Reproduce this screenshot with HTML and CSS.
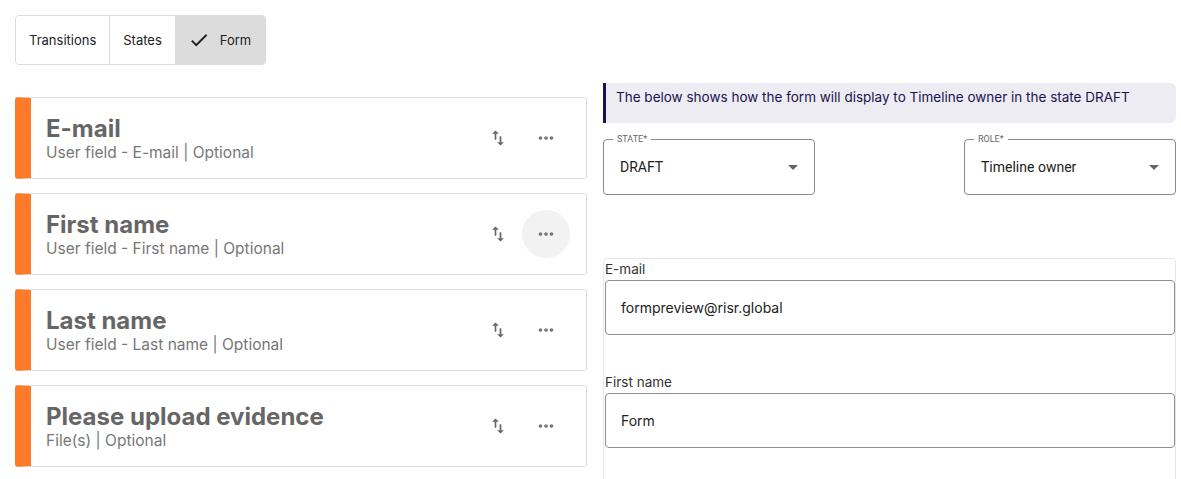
FILE: index.html
```html
<!DOCTYPE html>
<html lang="en">

<head>
    <meta charset="UTF-8">
    <title>Form builder</title>
    <link rel="stylesheet" href="styles.css">
</head>

<body>
    <div class="tabs">
        <button class="tab">Transitions</button>
        <button class="tab">States</button>
        <button class="tab active">
            <svg class="check" viewBox="0 0 24 24" width="22" height="22"><path d="M9 16.17L4.83 12l-1.42 1.41L9 19 21 7l-1.41-1.41z"/></svg>
            Form
        </button>
    </div>

    <div class="layout">
        <div class="fields">
            <div class="field-card">
                <div class="field-text">
                    <div class="field-title">E-mail</div>
                    <div class="field-sub">User field - E-mail | Optional</div>
                </div>
                <span class="icon-btn"><svg viewBox="0 0 24 24" width="20" height="20"><path d="M9 3L5 6.99h3V14h2V6.99h3L9 3zm7 14.01V10h-2v7.01h-3L15 21l4-3.99h-3z"/></svg></span>
                <span class="icon-btn dots"><svg viewBox="0 0 24 24" width="22" height="22"><path d="M6 10c-1.1 0-2 .9-2 2s.9 2 2 2 2-.9 2-2-.9-2-2-2zm12 0c-1.1 0-2 .9-2 2s.9 2 2 2 2-.9 2-2-.9-2-2-2zm-6 0c-1.1 0-2 .9-2 2s.9 2 2 2 2-.9 2-2-.9-2-2-2z"/></svg></span>
            </div>
            <div class="field-card">
                <div class="field-text">
                    <div class="field-title">First name</div>
                    <div class="field-sub">User field - First name | Optional</div>
                </div>
                <span class="icon-btn"><svg viewBox="0 0 24 24" width="20" height="20"><path d="M9 3L5 6.99h3V14h2V6.99h3L9 3zm7 14.01V10h-2v7.01h-3L15 21l4-3.99h-3z"/></svg></span>
                <span class="icon-btn dots hover"><svg viewBox="0 0 24 24" width="22" height="22"><path d="M6 10c-1.1 0-2 .9-2 2s.9 2 2 2 2-.9 2-2-.9-2-2-2zm12 0c-1.1 0-2 .9-2 2s.9 2 2 2 2-.9 2-2-.9-2-2-2zm-6 0c-1.1 0-2 .9-2 2s.9 2 2 2 2-.9 2-2-.9-2-2-2z"/></svg></span>
            </div>
            <div class="field-card">
                <div class="field-text">
                    <div class="field-title">Last name</div>
                    <div class="field-sub">User field - Last name | Optional</div>
                </div>
                <span class="icon-btn"><svg viewBox="0 0 24 24" width="20" height="20"><path d="M9 3L5 6.99h3V14h2V6.99h3L9 3zm7 14.01V10h-2v7.01h-3L15 21l4-3.99h-3z"/></svg></span>
                <span class="icon-btn dots"><svg viewBox="0 0 24 24" width="22" height="22"><path d="M6 10c-1.1 0-2 .9-2 2s.9 2 2 2 2-.9 2-2-.9-2-2-2zm12 0c-1.1 0-2 .9-2 2s.9 2 2 2 2-.9 2-2-.9-2-2-2zm-6 0c-1.1 0-2 .9-2 2s.9 2 2 2 2-.9 2-2-.9-2-2-2z"/></svg></span>
            </div>
            <div class="field-card">
                <div class="field-text">
                    <div class="field-title">Please upload evidence</div>
                    <div class="field-sub">File(s) | Optional</div>
                </div>
                <span class="icon-btn"><svg viewBox="0 0 24 24" width="20" height="20"><path d="M9 3L5 6.99h3V14h2V6.99h3L9 3zm7 14.01V10h-2v7.01h-3L15 21l4-3.99h-3z"/></svg></span>
                <span class="icon-btn dots"><svg viewBox="0 0 24 24" width="22" height="22"><path d="M6 10c-1.1 0-2 .9-2 2s.9 2 2 2 2-.9 2-2-.9-2-2-2zm12 0c-1.1 0-2 .9-2 2s.9 2 2 2 2-.9 2-2-.9-2-2-2zm-6 0c-1.1 0-2 .9-2 2s.9 2 2 2 2-.9 2-2-.9-2-2-2z"/></svg></span>
            </div>
        </div>

        <div class="preview">
            <div class="notice">The below shows how the form will display to Timeline owner in the state DRAFT</div>

            <div class="selects">
                <div class="select">
                    <span class="select-label">STATE*</span>
                    <span class="select-value">DRAFT</span>
                    <span class="caret"></span>
                </div>
                <div class="select">
                    <span class="select-label">ROLE*</span>
                    <span class="select-value">Timeline owner</span>
                    <span class="caret"></span>
                </div>
            </div>

            <div class="form-preview">
                <div class="form-group">
                    <label>E-mail</label>
                    <div class="input">formpreview@risr.global</div>
                </div>
                <div class="form-group">
                    <label>First name</label>
                    <div class="input">Form</div>
                </div>
            </div>
        </div>
    </div>
</body>

</html>
```

FILE: styles.css
```css
body {
    margin: 0;
    padding: 15px 5px 0 15px;
    font-family: "Inter", "Liberation Sans", sans-serif;
    color: #333;
    background: white;
    overflow: hidden;
}

/* tabs */
.tabs {
    display: inline-flex;
    border: 1px solid #dcdcdc;
    border-radius: 4px;
    overflow: hidden;
    height: 48px;
}

.tab {
    display: flex;
    align-items: center;
    gap: 10px;
    padding: 0 13px;
    border: none;
    border-right: 1px solid #dcdcdc;
    background: white;
    font-family: inherit;
    font-size: 13px;
    color: #222;
}

.tab:last-child {
    border-right: none;
}

.tab.active {
    background: #dcdcdc;
    padding: 0 14px 0 12px;
}

.check {
    fill: #222;
}

/* layout */
.layout {
    display: grid;
    grid-template-columns: 572px 1fr;
    gap: 16px;
    margin-top: 18px;
}

.fields {
    display: flex;
    flex-direction: column;
    gap: 14px;
    padding-top: 14px;
}

.field-card {
    display: flex;
    align-items: center;
    height: 82px;
    border: 1px solid #dedede;
    border-left: 16px solid #fd7a2b;
    border-radius: 3px;
    padding-right: 16px;
    box-sizing: border-box;
}

.field-text {
    flex: 1;
    padding-left: 15px;
    padding-top: 2px;
}

.field-title {
    font-size: 24px;
    font-weight: 700;
    color: #666;
    line-height: 28px;
}

.field-sub {
    font-size: 15.5px;
    color: #777;
    line-height: 20px;
}

.icon-btn {
    display: flex;
    align-items: center;
    justify-content: center;
    width: 48px;
    height: 48px;
    border-radius: 50%;
    fill: #666;
}

.icon-btn.dots {
    fill: #777;
}

.icon-btn.hover {
    background: #f2f2f2;
}

/* preview */
.notice {
    background: #ececf2;
    border-left: 3px solid #1c1250;
    border-radius: 0 6px 6px 0;
    padding: 6px 10px 18px 10px;
    font-size: 13.5px;
    color: #1c1250;
    line-height: 16px;
}

.selects {
    display: flex;
    justify-content: space-between;
    margin-top: 16px;
}

.select {
    position: relative;
    display: flex;
    align-items: center;
    width: 212px;
    height: 56px;
    padding: 0 16px;
    border: 1px solid #8a8a8a;
    border-radius: 4px;
    box-sizing: border-box;
    font-family: "Roboto", sans-serif;
}

.select-label {
    position: absolute;
    top: -6px;
    left: 9px;
    padding: 0 4px;
    background: white;
    font-size: 9px;
    color: #666;
    line-height: 10px;
}

.select-value {
    font-size: 14px;
    color: #222;
}

.caret {
    position: absolute;
    right: 16px;
    top: 25px;
    border-left: 5px solid transparent;
    border-right: 5px solid transparent;
    border-top: 5px solid #666;
}

.form-preview {
    margin-top: 63px;
    border: 1px solid #e6e6e6;
    border-radius: 4px;
    padding: 2px 0 0 1px;
    height: 260px;
}

.form-group {
    margin-bottom: 39px;
}

.form-group label {
    display: block;
    font-size: 13.5px;
    color: #333;
    line-height: 17px;
    margin-bottom: 2px;
}

.input {
    height: 55px;
    border: 1px solid #8e8e8e;
    border-radius: 4px;
    box-sizing: border-box;
    padding: 0 15px;
    display: flex;
    align-items: center;
    font-size: 14px;
    color: #222;
}
```
